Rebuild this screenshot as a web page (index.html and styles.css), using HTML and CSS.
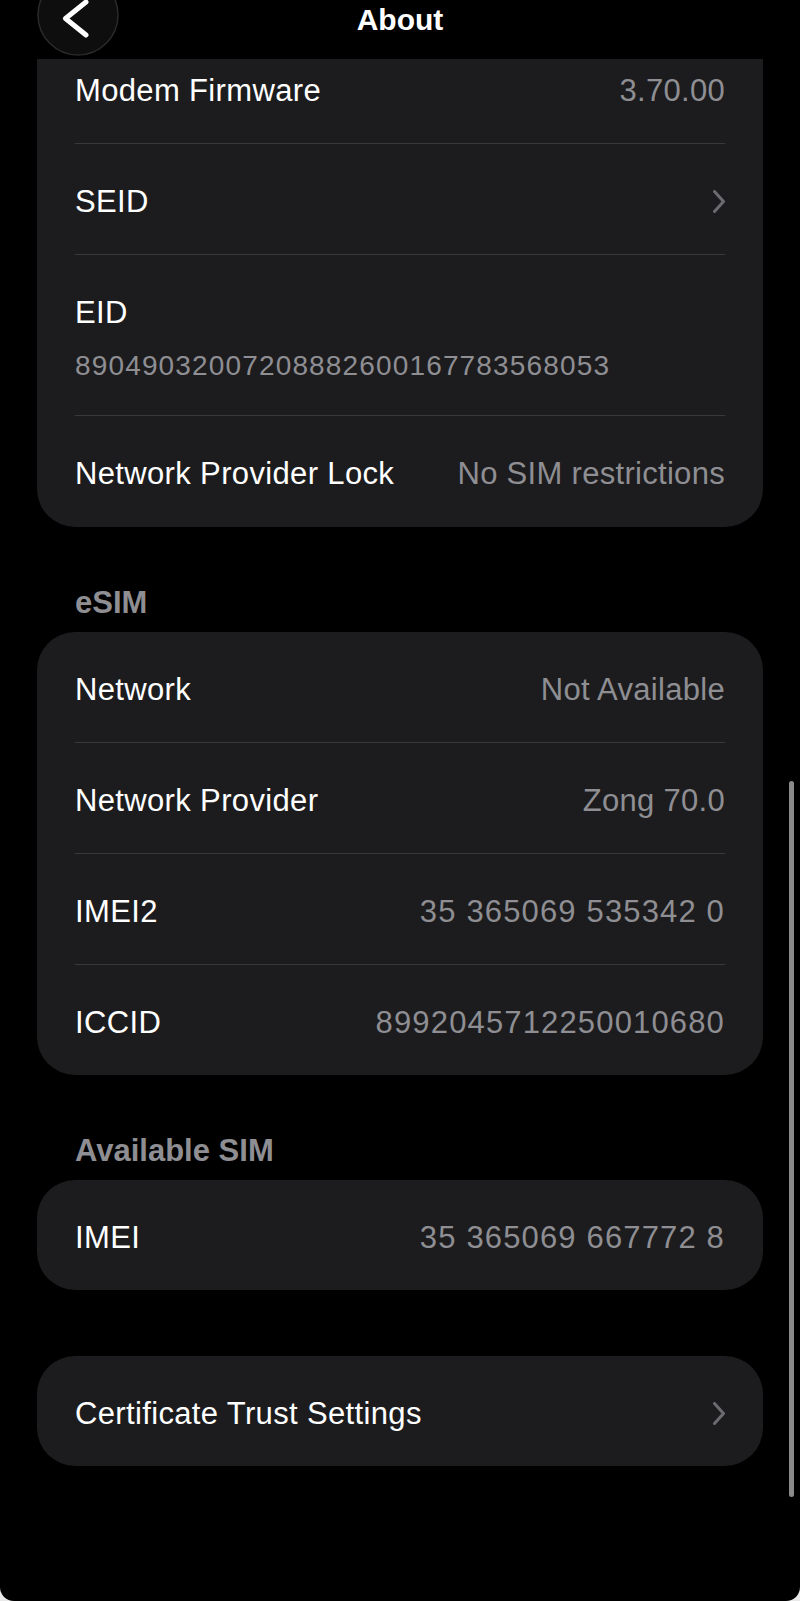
FILE: index.html
```html
<!DOCTYPE html>
<html lang="en">
<head>
  <meta charset="UTF-8">
  <title>About</title>
  <meta name="viewport" content="width=device-width, initial-scale=1.0">
  <link rel="stylesheet" href="styles.css">
</head>
<body>
  <div class="screen">
    <header class="nav-bar">
      <button class="back-button" aria-label="Back">
        <svg width="82" height="82" viewBox="0 0 82 82">
          <circle cx="41" cy="41" r="40" fill="#0e0e0e" stroke="#2a2a2a" stroke-width="1.5"/>
          <path d="M49 28 L28.5 44.5 L49 61" fill="none" stroke="#fff" stroke-width="5" stroke-linecap="round" stroke-linejoin="round"/>
        </svg>
      </button>
      <h1 class="nav-title">About</h1>
    </header>

    <main class="content">
      <section class="group group-cut">
        <div class="row">
          <span class="label">Modem Firmware</span>
          <span class="value">3.70.00</span>
        </div>
        <div class="row">
          <span class="label">SEID</span>
          <svg class="chevron" width="12" height="23" viewBox="0 0 12 23">
            <path d="M1.5 1.5 L10.5 11.5 L1.5 21.5" fill="none" stroke="#6b6b70" stroke-width="3" stroke-linecap="round" stroke-linejoin="round"/>
          </svg>
        </div>
        <div class="row row-stacked">
          <span class="label">EID</span>
          <span class="value numeric">89049032007208882600167783568053</span>
        </div>
        <div class="row">
          <span class="label">Network Provider Lock</span>
          <span class="value">No SIM restrictions</span>
        </div>
      </section>

      <h2 class="group-title">eSIM</h2>
      <section class="group">
        <div class="row">
          <span class="label">Network</span>
          <span class="value">Not Available</span>
        </div>
        <div class="row">
          <span class="label">Network Provider</span>
          <span class="value">Zong 70.0</span>
        </div>
        <div class="row">
          <span class="label">IMEI2</span>
          <span class="value numeric">35 365069 535342 0</span>
        </div>
        <div class="row">
          <span class="label">ICCID</span>
          <span class="value numeric">8992045712250010680</span>
        </div>
      </section>

      <h2 class="group-title">Available SIM</h2>
      <section class="group">
        <div class="row">
          <span class="label">IMEI</span>
          <span class="value numeric">35 365069 667772 8</span>
        </div>
      </section>

      <section class="group group-spaced">
        <div class="row">
          <span class="label">Certificate Trust Settings</span>
          <svg class="chevron" width="12" height="23" viewBox="0 0 12 23">
            <path d="M1.5 1.5 L10.5 11.5 L1.5 21.5" fill="none" stroke="#6b6b70" stroke-width="3" stroke-linecap="round" stroke-linejoin="round"/>
          </svg>
        </div>
      </section>
    </main>

    <div class="scroll-indicator"></div>
  </div>
</body>
</html>
```

FILE: styles.css
```css
html {
  background: #e9e9e9;
}

body {
  margin: 0;
  padding: 0;
  font-family: 'Liberation Sans', Arial, sans-serif;
  color: #fff;
}

.screen {
  position: relative;
  height: 1601px;
  background: #000;
  border-radius: 0 0 14px 14px;
  overflow: hidden;
}

/* Navigation bar (sits over the scrolled list) */
.nav-bar {
  position: absolute;
  top: 0;
  left: 0;
  right: 0;
  height: 59px;
  background: #000;
  z-index: 10;
}

.back-button {
  position: absolute;
  left: 37px;
  top: -26px;
  width: 82px;
  height: 82px;
  padding: 0;
  border: none;
  background: none;
}

.back-button svg {
  display: block;
}

.nav-title {
  margin: 0;
  text-align: center;
  font-size: 30px;
  font-weight: bold;
  line-height: 40px;
}

/* List */
.content {
  padding-top: 33px;
}

.group {
  margin: 0 37px;
  padding: 0 38px;
  background: #1c1c1e;
  border-radius: 38px;
}

.group-cut {
  border-top-left-radius: 0;
  border-top-right-radius: 0;
  padding-bottom: 1px;
}

.group-spaced {
  margin-top: 66px;
}

.group-title {
  margin: 57px 0 10px 75px;
  font-size: 31px;
  font-weight: bold;
  line-height: 38px;
  color: #8e8e93;
}

.row {
  display: flex;
  align-items: center;
  justify-content: space-between;
  height: 105px;
  padding-top: 5px;
  font-size: 31px;
  line-height: 38px;
}

.row + .row {
  border-top: 1px solid #38383a;
}

.row-stacked {
  flex-direction: column;
  align-items: flex-start;
  justify-content: flex-start;
  gap: 15px;
  height: 121px;
  padding-top: 39px;
}

.row-stacked .value {
  font-size: 28px;
}

.label {
  color: #fff;
  white-space: nowrap;
  letter-spacing: 0.35px;
}

.value {
  color: #8e8e93;
  white-space: nowrap;
  letter-spacing: 0.3px;
}

.value.numeric {
  letter-spacing: 1.15px;
}

.chevron {
  display: block;
}

.scroll-indicator {
  position: absolute;
  right: 6px;
  top: 781px;
  width: 5px;
  height: 716px;
  border-radius: 3px;
  background: #8a8a8a;
}
```
